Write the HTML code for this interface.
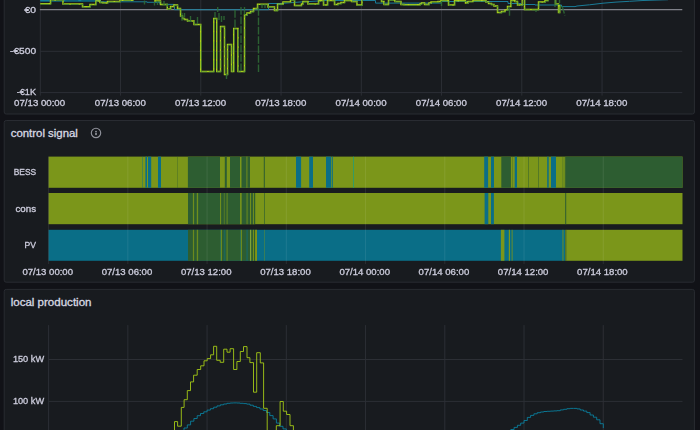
<!DOCTYPE html>
<html><head><meta charset="utf-8"><title>dashboard</title>
<style>html,body{margin:0;padding:0;background:#111217;overflow:hidden}body{width:700px;height:430px;font-family:"Liberation Sans",sans-serif}</style>
</head><body>
<svg width="700" height="430" viewBox="0 0 700 430" style="display:block;font-family:'Liberation Sans',sans-serif">
<rect width="700" height="430" fill="#111217"/>
<rect x="4.2" y="-20" width="690.1999999999999" height="134.0" rx="2" fill="#181b1f" stroke="#292c32" stroke-width="1"/>
<rect x="4.2" y="120.5" width="690.1999999999999" height="161.7" rx="2" fill="#181b1f" stroke="#292c32" stroke-width="1"/>
<rect x="4.2" y="289.4" width="690.1999999999999" height="170.60000000000002" rx="2" fill="#181b1f" stroke="#292c32" stroke-width="1"/>
<g id="p1">
<line x1="40.30" y1="0" x2="40.30" y2="95.6" stroke="#2c2f35" stroke-width="1"/>
<line x1="120.55" y1="0" x2="120.55" y2="95.6" stroke="#2c2f35" stroke-width="1"/>
<line x1="200.80" y1="0" x2="200.80" y2="95.6" stroke="#2c2f35" stroke-width="1"/>
<line x1="281.05" y1="0" x2="281.05" y2="95.6" stroke="#2c2f35" stroke-width="1"/>
<line x1="361.30" y1="0" x2="361.30" y2="95.6" stroke="#2c2f35" stroke-width="1"/>
<line x1="441.55" y1="0" x2="441.55" y2="95.6" stroke="#2c2f35" stroke-width="1"/>
<line x1="521.80" y1="0" x2="521.80" y2="95.6" stroke="#2c2f35" stroke-width="1"/>
<line x1="602.05" y1="0" x2="602.05" y2="95.6" stroke="#2c2f35" stroke-width="1"/>
<line x1="39.9" y1="51.3" x2="682.3" y2="51.3" stroke="#2c2f35" stroke-width="1"/>
<line x1="39.9" y1="92.6" x2="682.3" y2="92.6" stroke="#2c2f35" stroke-width="1"/>
<line x1="39.9" y1="9.7" x2="682.3" y2="9.7" stroke="#7f8189" stroke-width="1.3"/>
<path d="M40.3,0.7 H100 V1.8 H147 V2.3 H160 V4.4 H174.5 V9.7 H268.5 V3.5 H280 L300,2 L310,1.5 L325,0.5 H375.5 V3.1 H441.5 V1.5 H508 V3.5 H521 V4.5 H535 V5 H561.5 V6.6 H575 L577,6 L589.5,4.8 L603,3.2 L616,2.1 L629.6,1.3 L643,0.5 L668,-0.3" fill="none" stroke="#1a7c98" stroke-width="1.0"/>
<path d="M40.3,0.9 H101" fill="none" stroke="#0c5f79" stroke-width="1.9"/>
<path d="M40.3,0.6 H101" fill="none" stroke="#1282a0" stroke-width="0.9" stroke-dasharray="9 14 2 13 3 14"/>
<path d="M40.3,3.8 H50.5 V0.1 H63 V4 H82.5 V6.8 H90 V4.5 H96 V1 H100 V2.5 H103 V3 H107.5 V1.5 H120 V0.3 H133 V-2 H155 V1 H160.5 V4.5 H167.3 V9 H170.5 V6.5 H174 V5 H177.5 V8.5 H180.5 V16 H182.5 V18.5 H184.5 V19.5 H187.5 V21 H194 V24.5 H200.7 V71.5 H213.8 V18.5 H216.7 V71.5 H220.5 V26.5 H224.5 V74.5 H227.5 V44.5 H231.5 V71.5 H233.7 V28.5 H238 V71.5 H244.5 V15 H247 V13 H250.5 V11.5 H253.5 V8.5 H257.5 V4.3 H268 V7 H274.5 V10.5 H277.5 V4.2 H283 V2 H290.5 V0 H294.5 V5.5 H301.5 V4 H303 V1.5 H308 V4 H318.5 V1 H320 V0.5 H323.5 V5 H327.5 V0.5 H334.5 V4.5 H338 V3.5 H341 V2.5 H344.5 V0.5 H351.5 V1.5 H357 V5 H362 V-2 H381.5 V1.5 H384 V4.5 H388.5 V0 H395 V1.5 H401 V4.4 H404 V4.8 H420 V4 H421.5 V3 H424.5 V4.5 H429 V3 H431 V2 H438 V1.5 H441 V0.5 H448.5 V5 H454.5 V0.8 H465.5 V3 H468 V1.5 H473 V0.6 H486 V2 H488.5 V3.5 H491.5 V4.5 H494 V6 H497.5 V12.5 H501.5 V11.5 H505 V10 H507.5 V6.5 H511 V0.5 H515 V1.5 H517.5 V5 H522.3 V-1 H524.5 V9.5 H538.5 V2 H545 V0.5 H548 V-2 H555.5 V4 H558.5 V12.5 H559.7 V5" fill="none" stroke="#b0d418" stroke-width="1.45" stroke-linejoin="miter"/>
<path d="M40.3,3.8 H50.5 V0.1 H63 V4 H82.5 V6.8 H90 V4.5 H96 V1 H100 V2.5 H103 V3 H107.5 V1.5 H120 V0.3 H133 V-2 H155 V1 H160.5 V4.5 H167.3 V9 H170.5 V6.5 H174 V5 H177.5 V8.5 H180.5 V16 H182.5 V18.5 H184.5 V19.5 H187.5 V21 H194 V24.5 H200.7 V71.5 H213.8 V18.5 H216.7 V71.5 H220.5 V26.5 H224.5 V74.5 H227.5 V44.5 H231.5 V71.5 H233.7 V28.5 H238 V71.5 H244.5 V15 H247 V13 H250.5 V11.5 H253.5 V8.5 H257.5 V4.3 H268 V7 H274.5 V10.5 H277.5 V4.2 H283 V2 H290.5 V0 H294.5 V5.5 H301.5 V4 H303 V1.5 H308 V4 H318.5 V1 H320 V0.5 H323.5 V5 H327.5 V0.5 H334.5 V4.5 H338 V3.5 H341 V2.5 H344.5 V0.5 H351.5 V1.5 H357 V5 H362 V-2 H381.5 V1.5 H384 V4.5 H388.5 V0 H395 V1.5 H401 V4.4 H404 V4.8 H420 V4 H421.5 V3 H424.5 V4.5 H429 V3 H431 V2 H438 V1.5 H441 V0.5 H448.5 V5 H454.5 V0.8 H465.5 V3 H468 V1.5 H473 V0.6 H486 V2 H488.5 V3.5 H491.5 V4.5 H494 V6 H497.5 V12.5 H501.5 V11.5 H505 V10 H507.5 V6.5 H511 V0.5 H515 V1.5 H517.5 V5 H522.3 V-1 H524.5 V9.5 H538.5 V2 H545 V0.5 H548 V-2 H555.5 V4 H558.5 V12.5 H559.7 V5" transform="translate(0.55,0.45)" fill="none" stroke="#367939" stroke-width="0.9" stroke-dasharray="7.8 1.6" opacity="0.85"/>
<path d="M144.5,0.5 V4.5 M154.5,2 V5.5 M157.5,1 V5 M164,1 V5 M167,3 V7 M182,13 V22 M184.5,13 V17 M190.5,16 V22 M197.5,17 V24 M215,12 V18 M217.7,7 V12 M219,13 V20 M221.5,16 V22 M224,16 V20 M226.5,74 V79 M235,10 V29 M241,7 V71 M244.5,7 V15 M258.5,8 V72 M262,4.5 V8 M265,4.5 V8 M509.5,8 V16 M536,10 V12 M555,0 V7 M559.5,0 V3 M562,6 L565,15.5 M441.5,1 V6" fill="none" stroke="#306d36" stroke-width="1.4" stroke-dasharray="7.8 1.6" opacity="0.85"/>
</g>
<g id="p2">
<text x="10.7" y="136.75" font-size="10.3" text-anchor="start" fill="#d7d8e2" font-weight="normal" textLength="67.2" lengthAdjust="spacingAndGlyphs" stroke="#d7d8e2" stroke-width="0.3">control signal</text>
<g stroke="#8f919a" fill="none"><circle cx="96" cy="132.9" r="4.7" stroke-width="1.15"/></g>
<rect x="95.15" y="132.6" width="1.7" height="2.5" fill="#8f919a"/><rect x="95.15" y="130.9" width="1.7" height="1.1" fill="#8f919a"/>
<rect x="48.6" y="156.6" width="633.9" height="31.2" fill="#7b961a"/>
<rect x="142.1" y="156.6" width="0.8" height="31.2" fill="#0a6e87" opacity="0.5"/>
<rect x="145.4" y="156.6" width="1.6" height="31.2" fill="#0a6e87"/>
<rect x="148" y="156.6" width="3.2" height="31.2" fill="#0a6e87"/>
<rect x="158" y="156.6" width="3" height="31.2" fill="#0a6e87"/>
<rect x="177.2" y="156.6" width="0.7" height="31.2" fill="#2d5d31" opacity="0.5"/>
<rect x="187.9" y="156.6" width="32.1" height="31.2" fill="#2d5d31"/>
<rect x="224.8" y="156.6" width="2.0" height="31.2" fill="#2d5d31"/>
<rect x="230" y="156.6" width="10" height="31.2" fill="#2d5d31"/>
<rect x="241.5" y="156.6" width="8.5" height="31.2" fill="#2d5d31"/>
<rect x="246" y="156.6" width="1.7" height="31.2" fill="#7b961a" opacity="0.5"/>
<rect x="263.8" y="156.6" width="1.0" height="31.2" fill="#2d5d31"/>
<rect x="296" y="156.6" width="5.1" height="31.2" fill="#0a6e87"/>
<rect x="309.2" y="156.6" width="3.8" height="31.2" fill="#0a6e87"/>
<rect x="326" y="156.6" width="5" height="31.2" fill="#0a6e87"/>
<rect x="331.7" y="156.6" width="1.1" height="31.2" fill="#0a6e87"/>
<rect x="353.0" y="156.6" width="0.9" height="31.2" fill="#14a088" opacity="0.75"/>
<rect x="484.2" y="156.6" width="3.9" height="31.2" fill="#0a6e87"/>
<rect x="491" y="156.6" width="3" height="31.2" fill="#0a6e87"/>
<rect x="501.3" y="156.6" width="9.6" height="31.2" fill="#2d5d31"/>
<rect x="512.2" y="156.6" width="0.6" height="31.2" fill="#2d5d31" opacity="0.5"/>
<rect x="514.7" y="156.6" width="2.3" height="31.2" fill="#0a6e87"/>
<rect x="528.0" y="156.6" width="0.7" height="31.2" fill="#2d5d31" opacity="0.7"/>
<rect x="538.3" y="156.6" width="0.7" height="31.2" fill="#2d5d31" opacity="0.7"/>
<rect x="547.2" y="156.6" width="1.5" height="31.2" fill="#0a6e87"/>
<rect x="551" y="156.6" width="5" height="31.2" fill="#0a6e87"/>
<rect x="562.1" y="156.6" width="0.5" height="31.2" fill="#2d5d31" opacity="0.5"/>
<rect x="563.8" y="156.6" width="0.5" height="31.2" fill="#2d5d31" opacity="0.6"/>
<rect x="565.2" y="156.6" width="117.3" height="31.2" fill="#2d5d31"/>
<rect x="48.6" y="193.0" width="633.9" height="31.2" fill="#7b961a"/>
<rect x="188" y="193.0" width="67.2" height="31.2" fill="#2d5d31"/>
<rect x="192.9" y="193.0" width="1.2" height="31.2" fill="#7b961a" opacity="0.85"/>
<rect x="196.8" y="193.0" width="1.3" height="31.2" fill="#7b961a" opacity="0.85"/>
<rect x="220" y="193.0" width="1.1" height="31.2" fill="#7b961a" opacity="0.85"/>
<rect x="223.7" y="193.0" width="1.3" height="31.2" fill="#7b961a" opacity="0.4"/>
<rect x="226.3" y="193.0" width="1.7" height="31.2" fill="#7b961a" opacity="0.45"/>
<rect x="240" y="193.0" width="1.7" height="31.2" fill="#7b961a" opacity="0.9"/>
<rect x="246.2" y="193.0" width="1.9" height="31.2" fill="#7b961a" opacity="0.45"/>
<rect x="250" y="193.0" width="1.1" height="31.2" fill="#7b961a" opacity="0.85"/>
<rect x="252.9" y="193.0" width="1.1" height="31.2" fill="#7b961a" opacity="0.85"/>
<rect x="264.2" y="193.0" width="0.8" height="31.2" fill="#2d5d31" opacity="0.8"/>
<rect x="484.6" y="193.0" width="3.7" height="31.2" fill="#0a6e87"/>
<rect x="491" y="193.0" width="2.9" height="31.2" fill="#0a6e87"/>
<rect x="565.2" y="193.0" width="1.0" height="31.2" fill="#2d5d31"/>
<rect x="48.6" y="229.8" width="516.8" height="31.0" fill="#0a6e87"/>
<rect x="565.4" y="229.8" width="117.1" height="31.0" fill="#7b961a"/>
<rect x="188" y="229.8" width="68.9" height="31.0" fill="#2d5d31"/>
<rect x="192.9" y="229.8" width="1.2" height="31.0" fill="#7b961a" opacity="0.8"/>
<rect x="196.8" y="229.8" width="1.3" height="31.0" fill="#7b961a" opacity="0.8"/>
<rect x="220" y="229.8" width="0.7" height="31.0" fill="#0a6e87" opacity="0.8"/>
<rect x="220.7" y="229.8" width="1.3" height="31.0" fill="#7b961a" opacity="0.8"/>
<rect x="223.7" y="229.8" width="1.8" height="31.0" fill="#0a6e87" opacity="0.45"/>
<rect x="226.3" y="229.8" width="1.7" height="31.0" fill="#7b961a" opacity="0.45"/>
<rect x="240" y="229.8" width="0.7" height="31.0" fill="#0a6e87" opacity="0.8"/>
<rect x="240.7" y="229.8" width="1.3" height="31.0" fill="#7b961a" opacity="0.8"/>
<rect x="246.2" y="229.8" width="1.8" height="31.0" fill="#0a6e87" opacity="0.4"/>
<rect x="250" y="229.8" width="1.2" height="31.0" fill="#8fb03a" opacity="0.85"/>
<rect x="252.9" y="229.8" width="1.1" height="31.0" fill="#7b961a" opacity="0.9"/>
<rect x="255.2" y="229.8" width="1.7" height="31.0" fill="#8a9c12"/>
<rect x="264.2" y="229.8" width="0.8" height="31.0" fill="#7b961a" opacity="0.5"/>
<rect x="500.9" y="229.8" width="3.5" height="31.0" fill="#7b961a"/>
<rect x="508.8" y="229.8" width="1.2" height="31.0" fill="#7b961a"/>
<rect x="511.4" y="229.8" width="1.6" height="31.0" fill="#7b961a" opacity="0.5"/>
<rect x="562.1" y="229.8" width="1.7" height="31.0" fill="#7b961a" opacity="0.5"/>
<rect x="566.1" y="229.8" width="0.6" height="31.0" fill="#2d5d31" opacity="0.5"/>
<line x1="48.60" y1="156.6" x2="48.60" y2="264" stroke="#ffffff" stroke-opacity="0.085" stroke-width="1"/>
<line x1="127.84" y1="156.6" x2="127.84" y2="264" stroke="#ffffff" stroke-opacity="0.085" stroke-width="1"/>
<line x1="207.07" y1="156.6" x2="207.07" y2="264" stroke="#ffffff" stroke-opacity="0.085" stroke-width="1"/>
<line x1="286.31" y1="156.6" x2="286.31" y2="264" stroke="#ffffff" stroke-opacity="0.085" stroke-width="1"/>
<line x1="365.55" y1="156.6" x2="365.55" y2="264" stroke="#ffffff" stroke-opacity="0.085" stroke-width="1"/>
<line x1="444.79" y1="156.6" x2="444.79" y2="264" stroke="#ffffff" stroke-opacity="0.085" stroke-width="1"/>
<line x1="524.02" y1="156.6" x2="524.02" y2="264" stroke="#ffffff" stroke-opacity="0.085" stroke-width="1"/>
<line x1="603.26" y1="156.6" x2="603.26" y2="264" stroke="#ffffff" stroke-opacity="0.085" stroke-width="1"/>
</g>
<g id="p3">
<text x="10.7" y="305.8" font-size="10.3" text-anchor="start" fill="#d7d8e2" font-weight="normal" textLength="80.8" lengthAdjust="spacingAndGlyphs" stroke="#d7d8e2" stroke-width="0.3">local production</text>
<line x1="48.60" y1="325.1" x2="48.60" y2="431" stroke="#2c2f35" stroke-width="1"/>
<line x1="127.84" y1="325.1" x2="127.84" y2="431" stroke="#2c2f35" stroke-width="1"/>
<line x1="207.07" y1="325.1" x2="207.07" y2="431" stroke="#2c2f35" stroke-width="1"/>
<line x1="286.31" y1="325.1" x2="286.31" y2="431" stroke="#2c2f35" stroke-width="1"/>
<line x1="365.55" y1="325.1" x2="365.55" y2="431" stroke="#2c2f35" stroke-width="1"/>
<line x1="444.79" y1="325.1" x2="444.79" y2="431" stroke="#2c2f35" stroke-width="1"/>
<line x1="524.02" y1="325.1" x2="524.02" y2="431" stroke="#2c2f35" stroke-width="1"/>
<line x1="603.26" y1="325.1" x2="603.26" y2="431" stroke="#2c2f35" stroke-width="1"/>
<line x1="48.6" y1="359.5" x2="682.5" y2="359.5" stroke="#2c2f35" stroke-width="1"/>
<line x1="48.6" y1="401.4" x2="682.5" y2="401.4" stroke="#2c2f35" stroke-width="1"/>
<path d="M180.7,430.9 H184.0 V428.0 H187.3 V424.9 H190.6 V421.2 H193.9 V418.5 H197.2 V415.7 H200.5 V413.5 H203.8 V411.8 H207.1 V410.1 H210.4 V408.7 H213.7 V407.2 H217.0 V405.9 H220.3 V404.8 H223.6 V404.0 H226.9 V403.3 H230.2 V403.0 H233.5 V402.9 H236.8 V403.0 H240.1 V403.3 H243.4 V403.6 H246.7 V404.1 H250.0 V405.2 H253.3 V406.4 H256.6 V407.6 H259.9 V409.0 H263.2 V410.5 H266.5 V412.5 H269.8 V415.6 H273.1 V418.9 H276.4 V423.1 H279.7 V426.3 H283.0 V428.9 H286.3 V432.2" fill="none" stroke="#0a84a4" stroke-width="0.85"/>
<path d="M507.5,431.9 H510.8 V429.5 H514.1 V427.4 H517.4 V425.3 H520.7 V423.1 H524.0 V420.5 H527.3 V417.4 H530.6 V415.4 H533.9 V413.8 H537.2 V412.7 H540.5 V412.0 H543.8 V411.5 H547.1 V411.3 H550.4 V411.1 H553.7 V410.9 H557.0 V410.7 H560.3 V409.9 H563.6 V409.3 H566.9 V408.7 H570.2 V408.4 H573.5 V408.4 H576.9 V408.9 H580.2 V410.0 H583.5 V411.1 H586.8 V412.6 H590.1 V415.0 H593.4 V417.2 H596.7 V419.8 H600.0 V423.7 H603.3 V428.1" fill="none" stroke="#0a84a4" stroke-width="0.85"/>
<path d="M174.5,432 V421.6 H177.6 V426.2 H181.3 V407.4 H184.1 V399.7 H187.3 V390.6 H190.5 V381.9 H193.6 V375.2 H197.2 V369.5 H200.7 V365.8 H204 V360.8 H207.2 V358.6 H210.6 V354.8 H213.6 V346.3 H216.7 V360.3 H220.2 V362.3 H223.7 V349.2 H227 V352.2 H230.1 V348.7 H233.6 V369.5 H236.9 V361.5 H240.3 V351.5 H243.5 V346.6 H247 V357.7 H249.9 V362.6 H253.5 V392.2 H256.7 V352.7 H260.3 V362.9 H263.6 V408.3 H267.2 V432 M276.3,432 V425.7 H280.1 V401.5 H283.3 V411.2 H286.6 V414.5 H290 V425.7 H293.4 V432" fill="none" stroke="#a5cb16" stroke-width="0.9"/>
</g>
</svg>
<svg width="700" height="430" viewBox="0 0 700 430" style="position:absolute;left:0;top:0;will-change:transform;font-family:'Liberation Sans',sans-serif">
<text x="39.6" y="106" font-size="9.2" text-anchor="middle" fill="#ccccdc" font-weight="normal" textLength="51" lengthAdjust="spacingAndGlyphs" stroke="#ccccdc" stroke-width="0.32">07/13 00:00</text>
<text x="120.35" y="106" font-size="9.2" text-anchor="middle" fill="#ccccdc" font-weight="normal" textLength="51" lengthAdjust="spacingAndGlyphs" stroke="#ccccdc" stroke-width="0.32">07/13 06:00</text>
<text x="200.6" y="106" font-size="9.2" text-anchor="middle" fill="#ccccdc" font-weight="normal" textLength="51" lengthAdjust="spacingAndGlyphs" stroke="#ccccdc" stroke-width="0.32">07/13 12:00</text>
<text x="280.85" y="106" font-size="9.2" text-anchor="middle" fill="#ccccdc" font-weight="normal" textLength="51" lengthAdjust="spacingAndGlyphs" stroke="#ccccdc" stroke-width="0.32">07/13 18:00</text>
<text x="361.1" y="106" font-size="9.2" text-anchor="middle" fill="#ccccdc" font-weight="normal" textLength="51" lengthAdjust="spacingAndGlyphs" stroke="#ccccdc" stroke-width="0.32">07/14 00:00</text>
<text x="441.35" y="106" font-size="9.2" text-anchor="middle" fill="#ccccdc" font-weight="normal" textLength="51" lengthAdjust="spacingAndGlyphs" stroke="#ccccdc" stroke-width="0.32">07/14 06:00</text>
<text x="521.6" y="106" font-size="9.2" text-anchor="middle" fill="#ccccdc" font-weight="normal" textLength="51" lengthAdjust="spacingAndGlyphs" stroke="#ccccdc" stroke-width="0.32">07/14 12:00</text>
<text x="601.85" y="106" font-size="9.2" text-anchor="middle" fill="#ccccdc" font-weight="normal" textLength="51" lengthAdjust="spacingAndGlyphs" stroke="#ccccdc" stroke-width="0.32">07/14 18:00</text>
<text x="36.1" y="13" font-size="9.2" text-anchor="end" fill="#ccccdc" font-weight="normal" textLength="11.5" lengthAdjust="spacingAndGlyphs" stroke="#ccccdc" stroke-width="0.32">€0</text>
<text x="36.1" y="54" font-size="9.2" text-anchor="end" fill="#ccccdc" font-weight="normal" textLength="26.1" lengthAdjust="spacingAndGlyphs" stroke="#ccccdc" stroke-width="0.32">-€500</text>
<text x="36.0" y="95" font-size="9.2" text-anchor="end" fill="#ccccdc" font-weight="normal" textLength="19.3" lengthAdjust="spacingAndGlyphs" stroke="#ccccdc" stroke-width="0.32">-€1K</text>
<text x="47.75" y="275" font-size="9.2" text-anchor="middle" fill="#ccccdc" font-weight="normal" textLength="50.6" lengthAdjust="spacingAndGlyphs" stroke="#ccccdc" stroke-width="0.32">07/13 00:00</text>
<text x="126.99" y="275" font-size="9.2" text-anchor="middle" fill="#ccccdc" font-weight="normal" textLength="50.6" lengthAdjust="spacingAndGlyphs" stroke="#ccccdc" stroke-width="0.32">07/13 06:00</text>
<text x="206.22" y="275" font-size="9.2" text-anchor="middle" fill="#ccccdc" font-weight="normal" textLength="50.6" lengthAdjust="spacingAndGlyphs" stroke="#ccccdc" stroke-width="0.32">07/13 12:00</text>
<text x="285.46" y="275" font-size="9.2" text-anchor="middle" fill="#ccccdc" font-weight="normal" textLength="50.6" lengthAdjust="spacingAndGlyphs" stroke="#ccccdc" stroke-width="0.32">07/13 18:00</text>
<text x="364.7" y="275" font-size="9.2" text-anchor="middle" fill="#ccccdc" font-weight="normal" textLength="50.6" lengthAdjust="spacingAndGlyphs" stroke="#ccccdc" stroke-width="0.32">07/14 00:00</text>
<text x="443.94" y="275" font-size="9.2" text-anchor="middle" fill="#ccccdc" font-weight="normal" textLength="50.6" lengthAdjust="spacingAndGlyphs" stroke="#ccccdc" stroke-width="0.32">07/14 06:00</text>
<text x="523.17" y="275" font-size="9.2" text-anchor="middle" fill="#ccccdc" font-weight="normal" textLength="50.6" lengthAdjust="spacingAndGlyphs" stroke="#ccccdc" stroke-width="0.32">07/14 12:00</text>
<text x="602.41" y="275" font-size="9.2" text-anchor="middle" fill="#ccccdc" font-weight="normal" textLength="50.6" lengthAdjust="spacingAndGlyphs" stroke="#ccccdc" stroke-width="0.32">07/14 18:00</text>
<text x="36.1" y="175" font-size="9.2" text-anchor="end" fill="#ccccdc" font-weight="normal" textLength="22.4" lengthAdjust="spacingAndGlyphs" stroke="#ccccdc" stroke-width="0.32">BESS</text>
<text x="36.1" y="212" font-size="9.2" text-anchor="end" fill="#ccccdc" font-weight="normal" textLength="20.6" lengthAdjust="spacingAndGlyphs" stroke="#ccccdc" stroke-width="0.32">cons</text>
<text x="36.1" y="248" font-size="9.2" text-anchor="end" fill="#ccccdc" font-weight="normal" textLength="11.5" lengthAdjust="spacingAndGlyphs" stroke="#ccccdc" stroke-width="0.32">PV</text>
<text x="44.1" y="362" font-size="9.2" text-anchor="end" fill="#ccccdc" font-weight="normal" textLength="31.2" lengthAdjust="spacingAndGlyphs" stroke="#ccccdc" stroke-width="0.32">150 kW</text>
<text x="44.1" y="404" font-size="9.2" text-anchor="end" fill="#ccccdc" font-weight="normal" textLength="31.2" lengthAdjust="spacingAndGlyphs" stroke="#ccccdc" stroke-width="0.32">100 kW</text>
</svg>
</body></html>
